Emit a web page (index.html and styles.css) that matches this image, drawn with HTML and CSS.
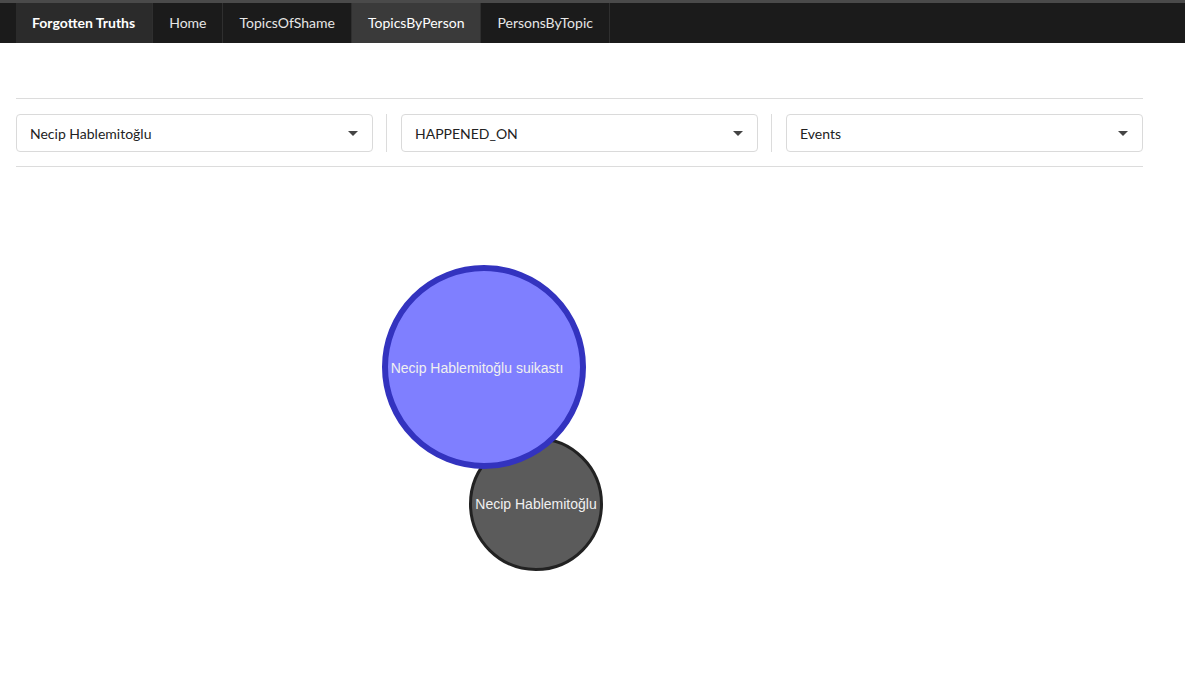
FILE: index.html
```html
<!DOCTYPE html>
<html>
<head>
<meta charset="utf-8">
<link rel="stylesheet" href="styles.css">
</head>
<body>
<div class="topstrip"></div>
<nav class="navbar">
  <a class="nav-item brand">Forgotten Truths</a>
  <a class="nav-item">Home</a>
  <a class="nav-item">TopicsOfShame</a>
  <a class="nav-item active">TopicsByPerson</a>
  <a class="nav-item">PersonsByTopic</a>
</nav>
<main class="content">
  <div class="filters">
    <div class="select"><span>Necip Hablemitoğlu</span><span class="caret"></span></div>
    <div class="divider"></div>
    <div class="select"><span>HAPPENED_ON</span><span class="caret"></span></div>
    <div class="divider"></div>
    <div class="select"><span>Events</span><span class="caret"></span></div>
  </div>
</main>
<svg class="graph" width="1185" height="530" viewBox="0 0 1185 530">
  <circle cx="536" cy="337" r="65.5" fill="#5b5b5b" stroke="#222" stroke-width="3"/>
  <text x="536" y="342" class="label">Necip Hablemitoğlu</text>
  <circle cx="484" cy="200" r="99" fill="#7f7fff" stroke="#3333bf" stroke-width="6"/>
  <text x="477" y="206" class="label">Necip Hablemitoğlu suikastı</text>
</svg>
</body>
</html>
```
FILE: styles.css
```css
html, body {
  margin: 0;
  padding: 0;
  background: #fff;
  font-family: Lato, "Open Sans", sans-serif;
}
.topstrip {
  height: 3px;
  background: #4a4a4a;
}
.navbar {
  display: flex;
  height: 40px;
  background: #1b1b1b;
  padding-left: 16px;
}
.nav-item {
  display: block;
  padding: 0 16px;
  line-height: 40px;
  font-size: 14px;
  color: #e6e6e6;
  border-right: 1px solid #2f2f2f;
  cursor: pointer;
}
.nav-item.brand {
  background: #2b2b2b;
  color: #fff;
  font-weight: 700;
  padding: 0 17px 0 16px;
}
.nav-item.active {
  background: #3a3a3a;
  color: #fff;
}
.content {
  width: 1127px;
  margin: 55px 0 0 16px;
}
.filters {
  display: flex;
  align-items: stretch;
  border-top: 1px solid #dcdcdc;
  border-bottom: 1px solid #dcdcdc;
  padding: 15px 0 14px;
}
.select {
  width: 357px;
  height: 38px;
  box-sizing: border-box;
  border: 1px solid #dadada;
  border-radius: 4px;
  padding: 0 14px 0 13px;
  display: flex;
  align-items: center;
  justify-content: space-between;
  font-size: 14px;
  color: #222;
}
.caret {
  width: 0;
  height: 0;
  border-left: 5px solid transparent;
  border-right: 5px solid transparent;
  border-top: 5px solid #444;
}
.divider {
  width: 1px;
  background: #dcdcdc;
  margin: 0 14px 0 13px;
}
.graph {
  display: block;
}
.label {
  font-family: "Liberation Sans", Arial, sans-serif;
  font-size: 14px;
  fill: #f0f0f0;
  text-anchor: middle;
}
```
